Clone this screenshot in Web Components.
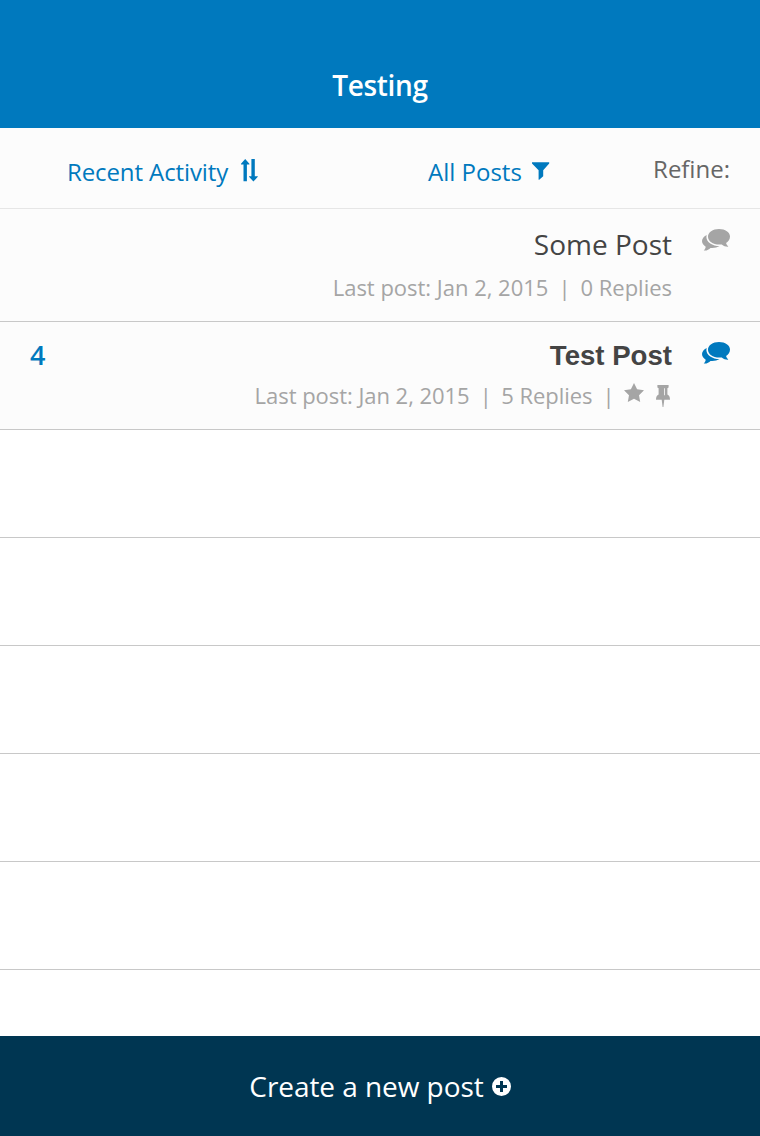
<!DOCTYPE html>
<html lang="en"><head><meta charset="utf-8"><title>Testing</title>
<style>html,body{margin:0;background:#fff}body{font-family:"Open Sans","Noto Sans",sans-serif}</style></head>
<body>
<forum-page>
  <forum-header slot="header">Testing</forum-header>
  <filter-bar slot="filters">
    <span slot="sort">Recent Activity</span><span slot="filter">All Posts</span><span slot="label">Refine:</span>
  </filter-bar>
  <post-row class="first"><span slot="title">Some Post</span><span slot="date">Last post: Jan 2, 2015</span><span slot="replies">0 Replies</span></post-row>
  <post-row class="unread"><span slot="count">4</span><span slot="title">Test Post</span><span slot="date">Last post: Jan 2, 2015</span><span slot="replies">5 Replies</span></post-row>
  <empty-row></empty-row><empty-row></empty-row><empty-row></empty-row><empty-row></empty-row><empty-row></empty-row><empty-row></empty-row>
  <create-bar slot="footer">Create a new post</create-bar>
</forum-page>
<script>
const icons = {
  sort: ['17 23', '<path d="M4.2 0 8.4 4.8V5.4H5.9V22.2H2.5V5.4H0V4.8ZM10.4 0H13.8V17.2H16.8V17.8L12.4 22.6 8 17.8V17.2H10.4Z"/>'],
  filter: ['18 18', '<path d="M0 .2H17.2V1.4L11.2 8.2V14.2L7.2 17.8H6.6V8.2L0 1.4Z"/>'],
  comments: ['28 22', '<path d="M17 0C23.2 0 28 3.3 28 7.6 28 10.5 26.4 12.8 24.1 14.1 24.4 15.5 25.3 16.6 26.4 17.6 24 17.8 21.7 17 19.8 15.4 11.9 16.3 6 12.7 6 7.7 6 3.3 10.8 0 17 0Z"/><path d="M4.6 5.9C1.7 7.4 0 9.6 0 12.1 0 14.5 1.7 16.5 3.7 17.7 3.6 19.2 2.8 20.5 1.7 21.4 4.4 21.8 6.9 20.7 8.5 18.9 12 19.2 15 18.6 17.6 17.1 10.2 17 4.6 13.2 4.4 8.2Z"/>'],
  star: ['20 20', '<path d="M10 0 13.1 6.3 20 7.3 15 12.2 16.2 19.1 10 15.8 3.8 19.1 5 12.2 0 7.3 6.9 6.3Z"/>'],
  pin: ['14 22', '<path fill-rule="evenodd" d="M1.4 0H12.6V2.4L11.4 3.2V9.6C13 10.4 14 12 14 14.8H8.3L7.4 22H6.6L5.7 14.8H0C0 12 1 10.4 2.6 9.6V3.2L1.4 2.4ZM8.1 3.2V10.2H8.9V3.2Z"/>'],
  plus: ['19 19', '<path fill-rule="evenodd" d="M9.5 0A9.5 9.5 0 1 0 9.5 19A9.5 9.5 0 1 0 9.5 0ZM8 4H11V8H15V11H11V15H8V11H4V8H8Z"/>']
};
function define(name, html, setup) {
  const template = document.createElement('template');
  template.innerHTML = html;
  customElements.define(name, class extends HTMLElement {
    constructor() {
      super();
      this.attachShadow({mode:'open'}).append(template.content.cloneNode(true));
      if (setup) setup(this);
    }
  });
}
customElements.define('ui-icon', class extends HTMLElement {
  connectedCallback() {
    if (this.shadowRoot) return;
    const [size, shape] = icons[this.getAttribute('name')];
    const [w,h] = size.split(' ');
    this.attachShadow({mode:'open'}).innerHTML = `<style>:host{display:block;flex:none;width:${w}px;height:${h}px}svg{display:block;fill:currentColor}</style><svg width="${w}" height="${h}" viewBox="0 0 ${size}" aria-hidden="true">${shape}</svg>`;
  }
});
define('forum-page', `<style>:host{display:grid;grid-template-rows:128px 81px 1fr 100px;height:1136px;width:760px;overflow:hidden}main{min-height:0;overflow:hidden}</style>
<slot name="header"></slot><slot name="filters"></slot><main><slot></slot></main><slot name="footer"></slot>`);
define('forum-header', `<style>:host{display:block;box-sizing:border-box;background:#0079be;color:#fff;padding-top:42px;text-align:center;font-size:28px;letter-spacing:-.3px;font-weight:600;line-height:86px}</style><slot></slot>`);
define('filter-bar', `<style>:host{display:grid;grid-template-columns:361px 1fr auto;box-sizing:border-box;background:#fcfcfc;border-bottom:1px solid #e6e6e6;color:#0079be;font-size:24px;line-height:34px;padding:27px 30px 0 67px;white-space:nowrap}div{display:flex}.sort{letter-spacing:-.1px}.sort ui-icon{margin:4px 0 0 13px}.filter ui-icon{margin:7px 0 0 10px}.label{color:#666;margin-top:-3px}</style>
<div class="sort"><slot name="sort"></slot><ui-icon name="sort"></ui-icon></div><div class="filter"><slot name="filter"></slot><ui-icon name="filter"></ui-icon></div><div class="label"><slot name="label"></slot></div>`);
define('post-row', `<style>:host{display:grid;grid-template-columns:1fr auto 28px;column-gap:30px;box-sizing:border-box;height:108px;padding:14px 30px 0;background:#fcfcfc;border-bottom:1px solid #c8c8c8;color:#444;white-space:nowrap}
:host(.first){height:113px;padding-top:16px}.count{color:#0079be;font-size:27px;font-weight:600;line-height:37px}.body{display:flex;flex-direction:column;align-items:flex-end}.title{font-size:28px;line-height:38px}:host(.unread) .title{font-family:"Liberation Sans",Arial,sans-serif;font-size:27.6px;font-weight:700;line-height:40px}
.meta{display:flex;margin-top:4px;font-size:22px;letter-spacing:-.04px;line-height:30px;color:#a5a5a5}:host(.first) .meta{margin-top:9px;letter-spacing:-.01px}.sep{margin:0 10px}.marks{display:none}:host(.unread) .marks{display:flex}:host(.unread) .sep{margin:0 9.5px 0 10px}.marks .star{margin:3px 12px 0 0}.marks .pin{margin:5px 2px 0 0}.comments{margin-top:4px;color:#a5a5a5}:host(.unread) .comments{margin-top:6px;color:#0079be}</style>
<div class="count"><slot name="count"></slot></div><div class="body"><div class="title"><slot name="title"></slot></div><div class="meta"><slot name="date"></slot><span class="sep">|</span><slot name="replies"></slot><div class="marks"></div></div></div><ui-icon class="comments" name="comments"></ui-icon>`, host => {
  if (host.classList.contains('unread')) host.shadowRoot.querySelector('.marks').innerHTML = '<span class="sep">|</span><ui-icon class="star" name="star"></ui-icon><ui-icon class="pin" name="pin"></ui-icon>';
});
define('empty-row', `<style>:host{display:block;box-sizing:border-box;height:108px;border-bottom:1px solid #c8c8c8;background:#fff}</style>`);
define('create-bar', `<style>:host{display:flex;align-items:center;justify-content:center;background:#003652;color:#fff;font-size:28px;letter-spacing:-.06px;line-height:38px}ui-icon{margin:0 0 0 8px}</style><slot></slot><ui-icon name="plus"></ui-icon>`);
</script>
</body></html>
